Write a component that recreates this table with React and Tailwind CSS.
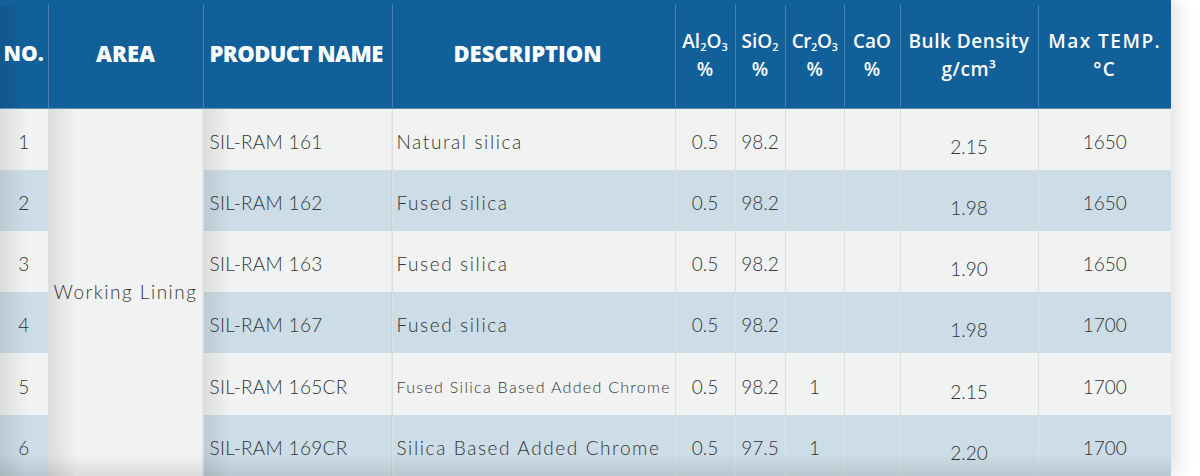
import React from "react";

const rows = [
  { no: 1, name: "SIL-RAM 161", desc: "Natural silica", al: "0.5", si: "98.2", cr: "", bd: "2.15", temp: "1650", h: "h-[62px]" },
  { no: 2, name: "SIL-RAM 162", desc: "Fused silica", al: "0.5", si: "98.2", cr: "", bd: "1.98", temp: "1650", h: "h-[61px]" },
  { no: 3, name: "SIL-RAM 163", desc: "Fused silica", al: "0.5", si: "98.2", cr: "", bd: "1.90", temp: "1650", h: "h-[61px]" },
  { no: 4, name: "SIL-RAM 167", desc: "Fused silica", al: "0.5", si: "98.2", cr: "", bd: "1.98", temp: "1700", h: "h-[61px]" },
  { no: 5, name: "SIL-RAM 165CR", desc: "Fused Silica Based Added Chrome", small: true, al: "0.5", si: "98.2", cr: "1", bd: "2.15", temp: "1700", h: "h-[62px]" },
  { no: 6, name: "SIL-RAM 169CR", desc: "Silica Based Added Chrome", al: "0.5", si: "97.5", cr: "1", bd: "2.20", temp: "1700", h: "h-[61px]" },
];

const shade = "bg-[linear-gradient(to_right,rgba(0,0,0,0.09),rgba(0,0,0,0)_28px)]";
const head = "font-['Open_Sans','Noto_Sans',sans-serif]";

export default function App() {
  return (
    <div className="h-[476px] w-[1200px] overflow-hidden bg-white font-['Lato','Noto_Sans',sans-serif]">
      <div className="relative w-[1171px] shadow-[6px_0_18px_rgba(0,0,0,0.12)]">
        <div className="h-[5px] bg-[#12609a]" />
        <table className="w-[1171px] table-fixed border-collapse">
          <colgroup>
            <col className="w-[48px]" />
            <col className="w-[155px]" />
            <col className="w-[189px]" />
            <col className="w-[283px]" />
            <col className="w-[60px]" />
            <col className="w-[50px]" />
            <col className="w-[59px]" />
            <col className="w-[56px]" />
            <col className="w-[138px]" />
            <col className="w-[133px]" />
          </colgroup>
          <thead className={head}>
            <tr className="h-[103px] border-b border-[#5b8fba] bg-[#12609a] text-white">
              <th className={`${shade} pb-[5px] text-[21px] font-extrabold`}>NO.</th>
              <th className="border-l border-[#4d82ae] pb-[5px] text-[22px] font-extrabold">AREA</th>
              <th className="border-l border-[#4d82ae] pb-[5px] text-left pl-[6px] text-[22px] font-extrabold tracking-tight whitespace-nowrap">PRODUCT NAME</th>
              <th className="border-l border-[#4d82ae] pb-[5px] pr-[12px] text-[22px] font-extrabold">DESCRIPTION</th>
              <th className="border-l border-[#4d82ae] pb-[2px] text-[19px] font-semibold leading-[28px] whitespace-nowrap">
                Al<sub className="text-[11px]">2</sub>O<sub className="text-[11px]">3</sub>
                <br />%
              </th>
              <th className="border-l border-[#4d82ae] pb-[2px] text-[19px] font-semibold leading-[28px] whitespace-nowrap">
                SiO<sub className="text-[11px]">2</sub>
                <br />%
              </th>
              <th className="border-l border-[#4d82ae] pb-[2px] text-[19px] font-semibold leading-[28px] tracking-tight whitespace-nowrap">
                Cr<sub className="text-[11px]">2</sub>O<sub className="text-[11px]">3</sub>
                <br />%
              </th>
              <th className="border-l border-[#4d82ae] pb-[2px] text-[19px] font-semibold leading-[28px]">
                CaO
                <br />%
              </th>
              <th className="border-l border-[#4d82ae] pb-[2px] text-[19px] font-semibold leading-[28px] tracking-[0.5px] whitespace-nowrap">
                Bulk Density
                <br />g/cm³
              </th>
              <th className="border-l border-[#4d82ae] pb-[2px] text-[19px] font-semibold leading-[28px] tracking-[1.5px] whitespace-nowrap">
                Max TEMP.
                <br />°C
              </th>
            </tr>
          </thead>
          <tbody className="text-[19px] font-light text-[#333]">
            {rows.map((r, i) => {
              const bg = i % 2 === 0 ? "bg-[#f1f3f2]" : "bg-[#cddde7]";
              return (
                <tr key={r.no} className={`${r.h} ${bg}`}>
                  <td className={`${shade} text-center pt-[6px]`}>{r.no}</td>
                  {i === 0 && (
                    <td
                      rowSpan={6}
                      className={`${shade} bg-[#f1f3f2] border-l border-[#dcdfe0] text-center whitespace-nowrap tracking-[1.5px]`}
                    >
                      Working Lining
                    </td>
                  )}
                  <td className={`${shade} border-l border-[#dcdfe0] pl-[6px] pt-[6px] whitespace-nowrap tracking-[0.3px]`}>{r.name}</td>
                  <td
                    className={`border-l border-[#dcdfe0] pl-[4px] pt-[6px] whitespace-nowrap ${
                      r.small ? "text-[16px] tracking-[1.3px]" : "tracking-[1.6px]"
                    }`}
                  >
                    {r.desc}
                  </td>
                  <td className="border-l border-[#dcdfe0] text-center pt-[6px]">{r.al}</td>
                  <td className="border-l border-[#dcdfe0] text-center pt-[6px]">{r.si}</td>
                  <td className="border-l border-[#dcdfe0] text-center pt-[6px]">{r.cr}</td>
                  <td className="border-l border-[#dcdfe0]"></td>
                  <td className="border-l border-[#dcdfe0] text-center pt-[16px]">{r.bd}</td>
                  <td className="border-l border-[#dcdfe0] text-center pt-[6px]">{r.temp}</td>
                </tr>
              );
            })}
          </tbody>
        </table>
        <div className="pointer-events-none absolute bottom-0 left-0 right-0 h-[22px] bg-gradient-to-b from-transparent to-black/10" />
      </div>
    </div>
  );
}
